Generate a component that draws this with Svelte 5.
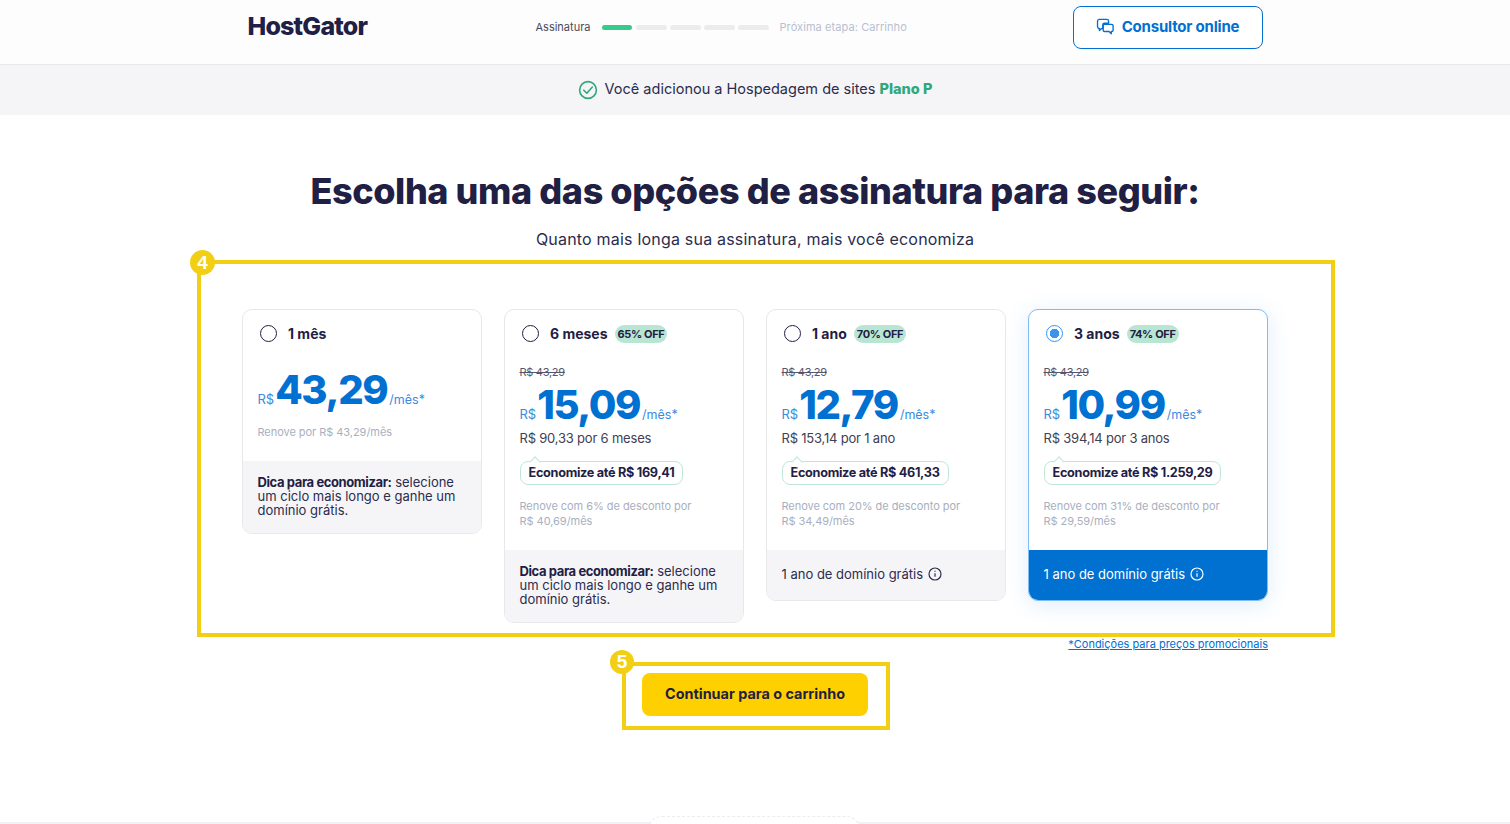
<script lang="ts">
	const plans = [
		{ id: 'm1', name: '1 mês', price: '43,29', renew: ['Renove por R$ 43,29/mês'], tip: true },
		{ id: 'm6', name: '6 meses', off: '65% OFF', price: '15,09', total: 'R$ 90,33 por 6 meses', save: 'Economize até R$ 169,41', renew: ['Renove com 6% de desconto por', 'R$ 40,69/mês'], tip: true },
		{ id: 'y1', name: '1 ano', off: '70% OFF', price: '12,79', total: 'R$ 153,14 por 1 ano', save: 'Economize até R$ 461,33', renew: ['Renove com 20% de desconto por', 'R$ 34,49/mês'] },
		{ id: 'y3', name: '3 anos', off: '74% OFF', price: '10,99', total: 'R$ 394,14 por 3 anos', save: 'Economize até R$ 1.259,29', renew: ['Renove com 31% de desconto por', 'R$ 29,59/mês'] }
	];

	let selected = $state('y3');
</script>

<div class="page">
	<header class="topbar">
		<div class="topbar-inner">
			<div class="logo">HostGator</div>
			<div class="steps">
				<span class="step-now">Assinatura</span>
				<div class="step-bars">
					<i class="done"></i><i></i><i></i><i></i><i></i>
				</div>
				<span class="step-next">Próxima etapa: Carrinho</span>
			</div>
			<button class="consultant">
				<svg width="18" height="18" viewBox="0 0 20 20" fill="none" stroke="currentColor" stroke-width="1.5" stroke-linejoin="round">
					<path d="M3.5 1.5h8.5a2 2 0 0 1 2 2v2.3H9.5a2 2 0 0 0-2 2v4H6l-2.300 2v-2.100a2 2 0 0 1-2-1.900V3.500a2 2 0 0 1 1.800-2z" />
					<path d="M9.500 7h8a1.500 1.500 0 0 1 1.500 1.500v5a1.500 1.500 0 0 1-1.500 1.500h-.5v2.500L14.500 15h-5A1.500 1.500 0 0 1 8 13.500v-5A1.500 1.500 0 0 1 9.500 7z" />
				</svg>
				Consultor online
			</button>
		</div>
	</header>

	<div class="added">
		<svg width="20" height="20" viewBox="0 0 20 20" fill="none" stroke="#2fa87a" stroke-width="1.6">
			<circle cx="10" cy="10" r="8.400" />
			<path d="M5.800 10.200l3 3 5.400-6" stroke-linecap="round" stroke-linejoin="round" />
		</svg>
		<span>Você adicionou a Hospedagem de sites <b>Plano P</b></span>
	</div>

	<main class="content">
		<h1>Escolha uma das opções de assinatura para seguir:</h1>
		<p class="lead">Quanto mais longa sua assinatura, mais você economiza</p>

		<div class="plans">
			<div class="mark mark-plans"><span class="mark-num">4</span></div>

			{#each plans as plan}
				<div class="plan" class:active={selected === plan.id}>
					<div class="plan-top" class:short={!plan.off}>
						<label class="plan-head">
							<input type="radio" name="plan" value={plan.id} bind:group={selected} />
							<span class="radio"></span>
							<span class="plan-name">{plan.name}</span>
							{#if plan.off}<span class="off">{plan.off}</span>{/if}
						</label>
						{#if plan.off}<div class="was">R$ 43,29</div>{/if}
						<div class="price">
							<span class="cur">R$</span><span class="amount">{plan.price}</span><span class="per">/mês*</span>
						</div>
						{#if plan.total}<div class="total">{plan.total}</div>{/if}
						{#if plan.save}<div class="save">{plan.save}</div>{/if}
						<div class="renew">
							{#each plan.renew as line}<div>{line}</div>{/each}
						</div>
					</div>
					{#if plan.tip}
						<div class="foot tip"><b>Dica para economizar:</b> selecione um ciclo mais longo e ganhe um domínio grátis.</div>
					{:else}
						<div class="foot domain">
							1 ano de domínio grátis
							<svg width="14" height="14" viewBox="0 0 14 14" fill="none" stroke="currentColor" stroke-width="1.200">
								<circle cx="7" cy="7" r="6" />
								<path d="M7 6.200v3.600M7 3.800v1" />
							</svg>
						</div>
					{/if}
				</div>
			{/each}
		</div>

		<div class="terms"><a href="#terms">*Condições para preços promocionais</a></div>

		<div class="cta">
			<div class="mark mark-cta"><span class="mark-num">5</span></div>
			<button class="continue">Continuar para o carrinho</button>
		</div>
	</main>

	<footer class="bottom">
		<div class="bottom-tab"></div>
	</footer>
</div>

<style>
	:global(body) {
		margin: 0;
		background: #fff;
		font-family: 'Inter', 'Liberation Sans', sans-serif;
		color: #1f2044;
	}

	.page {
		height: 824px;
		overflow: hidden;
		display: flex;
		flex-direction: column;
	}

	.topbar {
		height: 65px;
		box-sizing: border-box;
		background: #fdfdfd;
		border-bottom: 1px solid #e8e8ea;
	}

	.topbar-inner {
		width: 1015px;
		margin: 0 auto;
		height: 100%;
		padding-top: 6px;
		box-sizing: border-box;
		display: flex;
		align-items: flex-start;
	}

	.logo {
		width: 288px;
		margin-top: 4px;
		font-size: 25px;
		font-weight: 800;
		letter-spacing: -0.8px;
		line-height: 32px;
		color: #1f2044;
	}

	.steps {
		width: 537px;
		height: 42px;
		display: flex;
		align-items: center;
		font-size: 11px;
	}

	.step-now {
		color: #4a4a5c;
		width: 66px;
	}

	.step-bars {
		display: flex;
		gap: 3px;
		margin-right: 11px;
	}

	.step-bars i {
		width: 31px;
		height: 5px;
		border-radius: 3px;
		background: #ececee;
	}

	.step-bars i.done {
		width: 30px;
		margin-right: 1px;
		background: #36cb8c;
	}

	.step-next {
		color: #b7bfd0;
		letter-spacing: 0.08px;
	}

	.consultant {
		width: 190px;
		height: 43px;
		display: flex;
		align-items: center;
		justify-content: center;
		gap: 8px;
		background: #fff;
		border: 1px solid #0070d1;
		border-radius: 8px;
		color: #0070d1;
		font: 700 15px 'Inter', sans-serif;
		letter-spacing: -0.2px;
		padding-bottom: 3px;
	}

	.added {
		height: 50px;
		padding-bottom: 3px;
		box-sizing: border-box;
		background: #f5f5f7;
		display: flex;
		align-items: center;
		justify-content: center;
		gap: 7px;
		font-size: 14.500px;
		color: #2b2c4e;
	}

	.added svg {
		margin-top: 2px;
	}

	.added b {
		color: #2fa87a;
		font-weight: 800;
	}

	.content {
		width: 1026px;
		margin: 0 auto;
		flex: 1;
		display: flex;
		flex-direction: column;
	}

	h1 {
		margin: 52px 0 0;
		text-align: center;
		font-size: 36px;
		line-height: 48px;
		font-weight: 800;
		white-space: nowrap;
		color: #1f2044;
		letter-spacing: -0.4px;
	}

	.lead {
		margin: 13px 0 0;
		text-align: center;
		font-size: 16px;
		letter-spacing: 0.2px;
		line-height: 22px;
		color: #2b2c4e;
	}

	.plans {
		position: relative;
		margin-top: 59px;
		display: flex;
		align-items: flex-start;
		gap: 22px;
		height: 314px;
	}

	.mark {
		position: absolute;
		border: 4px solid #f2cf14;
		box-sizing: border-box;
		pointer-events: none;
	}

	.mark-plans {
		left: -45px;
		right: -67px;
		top: -49px;
		bottom: -14px;
	}

	.mark-cta {
		inset: 0 -1px 0 1px;
	}

	.mark-num {
		position: absolute;
		left: -11px;
		top: -14px;
		width: 25px;
		height: 25px;
		border-radius: 50%;
		background: #f2cf14;
		color: #fff;
		font: 700 19px/25px 'Liberation Sans', sans-serif;
		text-align: center;
	}

	.mark-cta .mark-num {
		left: -16px;
		top: -16px;
		width: 24px;
		height: 24px;
		line-height: 24px;
	}

	.plan {
		width: 240px;
		flex: none;
		box-sizing: border-box;
		border: 1px solid #e8e8ec;
		border-radius: 10px;
		overflow: hidden;
		background: #fff;
	}

	.plan.active {
		border-color: #7dbcf5;
		box-shadow: 0 4px 22px rgba(60, 140, 230, 0.16);
	}

	.plan-top {
		padding: 13px 14.500px 0;
		height: 240px;
		box-sizing: border-box;
	}

	.plan-top.short {
		height: 151px;
	}

	.plan-head {
		display: flex;
		align-items: center;
		height: 20px;
		padding-left: 2.500px;
		cursor: pointer;
	}

	.plan-head input {
		position: absolute;
		opacity: 0;
		width: 0;
		height: 0;
	}

	.radio {
		width: 17px;
		height: 17px;
		flex: none;
		box-sizing: border-box;
		border: 1.500px solid #1f2044;
		border-radius: 50%;
		margin-right: 11px;
	}

	input:checked + .radio {
		border-color: #3b93ee;
		background: radial-gradient(circle, #3b93ee 0 4.500px, #fff 5px);
	}

	.plan-name {
		font-size: 14px;
		font-weight: 700;
		margin-right: 7px;
	}

	.off {
		margin-top: 1px;
		background: #b9e6d2;
		border-radius: 9px;
		padding: 0 3px;
		font-size: 11px;
		line-height: 18px;
		font-weight: 700;
		letter-spacing: -0.35px;
	}

	.was {
		margin-top: 22px;
		font-size: 11px;
		line-height: 14px;
		letter-spacing: -0.3px;
		color: #55566c;
		text-decoration: line-through;
	}

	.price {
		display: flex;
		align-items: baseline;
		margin-top: 4px;
		color: #0070d1;
		height: 44px;
		line-height: 44px;
	}

	.short .price {
		margin-top: 25px;
	}

	.cur,
	.per {
		font-size: 13px;
		color: #3a8bdd;
	}

	.per {
		font-size: 12.500px;
	}

	.amount {
		font-size: 40px;
		font-weight: 800;
		letter-spacing: -1.4px;
		margin: 0 2px 0 1px;
	}

	.total {
		font-size: 13px;
		line-height: 18px;
		margin-top: 2px;
		letter-spacing: -0.2px;
		color: #3f4052;
	}

	.save {
		position: relative;
		width: fit-content;
		box-sizing: border-box;
		margin-top: 14px;
		padding: 0 8px;
		height: 24px;
		line-height: 22px;
		border: 1px solid #bfe7d6;
		border-radius: 8px;
		font-size: 12.700px;
		font-weight: 700;
		letter-spacing: -0.3px;
		white-space: nowrap;
	}

	.save::before {
		content: '';
		position: absolute;
		left: 10px;
		top: -4px;
		width: 7px;
		height: 7px;
		background: #fff;
		border-left: 1px solid #bfe7d6;
		border-top: 1px solid #bfe7d6;
		transform: rotate(45deg);
	}

	.renew {
		margin-top: 14px;
		font-size: 11px;
		line-height: 15px;
		letter-spacing: -0.05px;
		color: #a8afc0;
	}

	.short .renew {
		margin-top: 13px;
	}

	.foot {
		font-size: 13px;
		color: #2b2c4e;
		background: #f5f5f7;
	}

	.tip {
		padding: 14px 14.500px;
		line-height: 14px;
		height: 72px;
		box-sizing: border-box;
	}

	.tip b {
		font-weight: 700;
		letter-spacing: -0.4px;
		color: #1f2044;
	}

	.domain {
		display: flex;
		align-items: center;
		gap: 5px;
		height: 48px;
		padding: 0 14.500px 2px;
	}

	.active .domain {
		background: #0070d1;
		color: #fff;
	}

	.terms {
		margin-top: 14px;
		height: 14px;
		text-align: right;
		font-size: 11px;
		line-height: 14px;
	}

	.terms a {
		color: #0070d1;
	}

	.cta {
		position: relative;
		align-self: center;
		box-sizing: border-box;
		width: 268px;
		height: 68px;
		margin-top: 11px;
		display: flex;
		align-items: center;
		justify-content: center;
	}

	.continue {
		width: 226px;
		height: 43px;
		margin-bottom: 4px;
		padding-bottom: 3px;
		background: #ffd000;
		border: none;
		border-radius: 8px;
		color: #1f2044;
		font: 700 14.400px 'Inter', sans-serif;
	}

	.bottom {
		height: 2px;
		position: relative;
		background: #f2f2f4;
	}

	.bottom-tab {
		position: absolute;
		left: 648px;
		top: -6px;
		width: 212px;
		height: 20px;
		background: #fff;
		border: 1px dashed #ececee;
		border-radius: 14px 14px 0 0;
		box-sizing: border-box;
	}
</style>
